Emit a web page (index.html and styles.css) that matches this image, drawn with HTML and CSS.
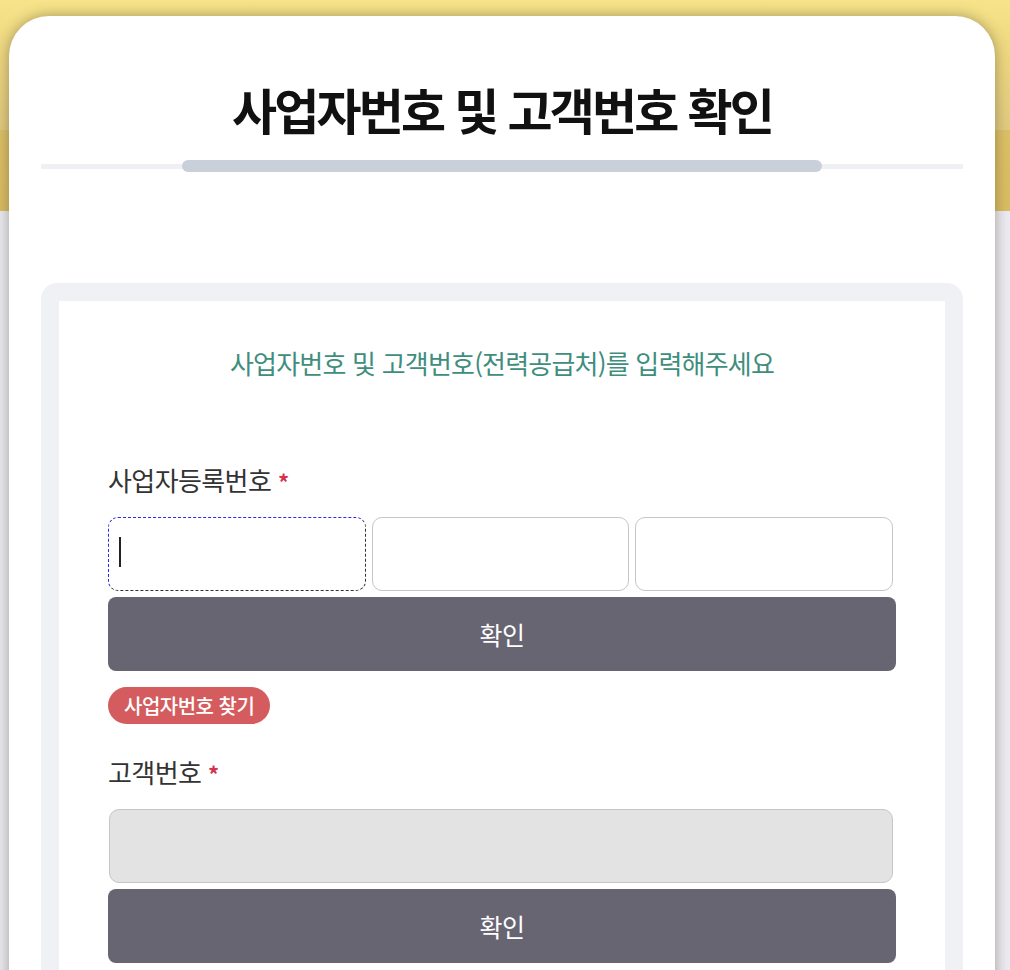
FILE: index.html
```html
<!DOCTYPE html>
<html lang="ko">
<head>
<meta charset="utf-8">
<title>사업자번호 및 고객번호 확인</title>
<link rel="stylesheet" href="styles.css">
</head>
<body>
<div class="page">
  <main class="card">
    <h1 class="title">사업자번호 및 고객번호 확인</h1>
    <div class="progress"><div class="progress-fill"></div></div>
    <section class="panel">
      <div class="inner">
        <p class="subtitle">사업자번호 및 고객번호(전력공급처)를 입력해주세요</p>

        <div class="field">
          <label class="label">사업자등록번호 <span class="req">*</span></label>
          <div class="biz-row">
            <span class="input-wrap focused"><input class="input" type="text"><span class="caret"></span></span>
            <span class="input-wrap"><input class="input" type="text"></span>
            <span class="input-wrap"><input class="input" type="text"></span>
          </div>
          <button class="btn" type="button">확인</button>
          <button class="pill" type="button">사업자번호 찾기</button>
        </div>

        <div class="field field-2">
          <label class="label">고객번호 <span class="req">*</span></label>
          <div class="single-row">
            <span class="input-wrap"><input class="input disabled" type="text" disabled></span>
          </div>
          <button class="btn" type="button">확인</button>
        </div>
      </div>
    </section>
  </main>
</div>
</body>
</html>
```

FILE: styles.css
```css
* { box-sizing: border-box; }
html, body { margin: 0; padding: 0; }
body {
  font-family: "Noto Sans CJK KR", "Noto Sans", sans-serif;
  background:
    linear-gradient(to bottom, #f7e48a 0, #ecd67f 60px, #e0ca80 130px, #dcc066 130px, #d9bd62 211px, #ebebf1 211px, #ebebf1 100%);
  min-height: 970px;
  overflow: hidden;
}
.page {
  padding: 16px 15px 0 9px;
}
.card {
  background: #fff;
  border-radius: 40px 40px 0 0;
  box-shadow: 0 0 14px rgba(70, 60, 40, 0.45);
  min-height: 954px;
  padding-top: 53px;
}
.title {
  margin: 0;
  text-align: center;
  font-size: 49px;
  font-weight: 700;
  letter-spacing: -2.8px;
  line-height: 80px;
  color: #111;
}
.progress {
  margin: 11px 32px 0;
  height: 12px;
  display: flex;
  justify-content: center;
  background: linear-gradient(#eff0f4, #eff0f4) center / 100% 5px no-repeat;
}
.progress-fill {
  width: 640px;
  height: 12px;
  border-radius: 6px;
  background: #c9d0da;
}
.panel {
  margin: 111px 32px 0;
  background: #f0f1f5;
  border-radius: 16px 16px 0 0;
  padding: 18px 18px 0;
  min-height: 700px;
}
.inner {
  background: #fff;
  padding: 44px 49px 40px;
  min-height: 700px;
}
.subtitle {
  margin: 0;
  text-align: center;
  color: #3f8e7d;
  font-size: 26px;
  font-weight: 400;
  letter-spacing: -0.8px;
  line-height: 36px;
}
.field { margin-top: 81px; }
.field-2 { margin-top: 30px; }
.label {
  display: block;
  font-size: 26px;
  font-weight: 400;
  letter-spacing: -0.6px;
  line-height: 36px;
  color: #333;
}
.req {
  color: #d2344f;
  font-weight: 700;
  font-size: 22px;
  margin-left: 0;
}
.biz-row {
  margin-top: 18px;
  margin-right: 3px;
  display: grid;
  grid-template-columns: 1fr 1fr 1fr;
  gap: 6px;
}
.single-row {
  margin-top: 18px;
  margin-right: 3px;
  padding-left: 1px;
}
.input-wrap {
  position: relative;
  display: block;
}
.input {
  display: block;
  width: 100%;
  height: 74px;
  border: 1px solid #c6c6c6;
  border-radius: 10px;
  background: #fff;
  font-size: 22px;
  padding: 0 10px;
  outline: none;
}
.input.disabled {
  background: #e3e3e3;
}
.focused .input {
  border: 1px dashed #2a2af5;
  border-right-color: #333;
  border-bottom-color: #333;
}
.caret {
  position: absolute;
  left: 11px;
  top: 20px;
  width: 2px;
  height: 30px;
  background: #222;
}
.btn {
  display: block;
  width: 100%;
  height: 74px;
  margin-top: 6px;
  border: 0;
  border-radius: 8px;
  background: #686572;
  color: #fff;
  font-family: inherit;
  font-size: 25px;
  font-weight: 400;
  letter-spacing: -0.5px;
  cursor: pointer;
}
.pill {
  display: inline-block;
  margin-top: 16px;
  height: 37px;
  padding: 0 16px;
  border: 0;
  border-radius: 19px;
  background: #d45c5e;
  color: #fff;
  font-family: inherit;
  font-size: 20px;
  font-weight: 500;
  letter-spacing: -0.5px;
  line-height: 37px;
}
```
